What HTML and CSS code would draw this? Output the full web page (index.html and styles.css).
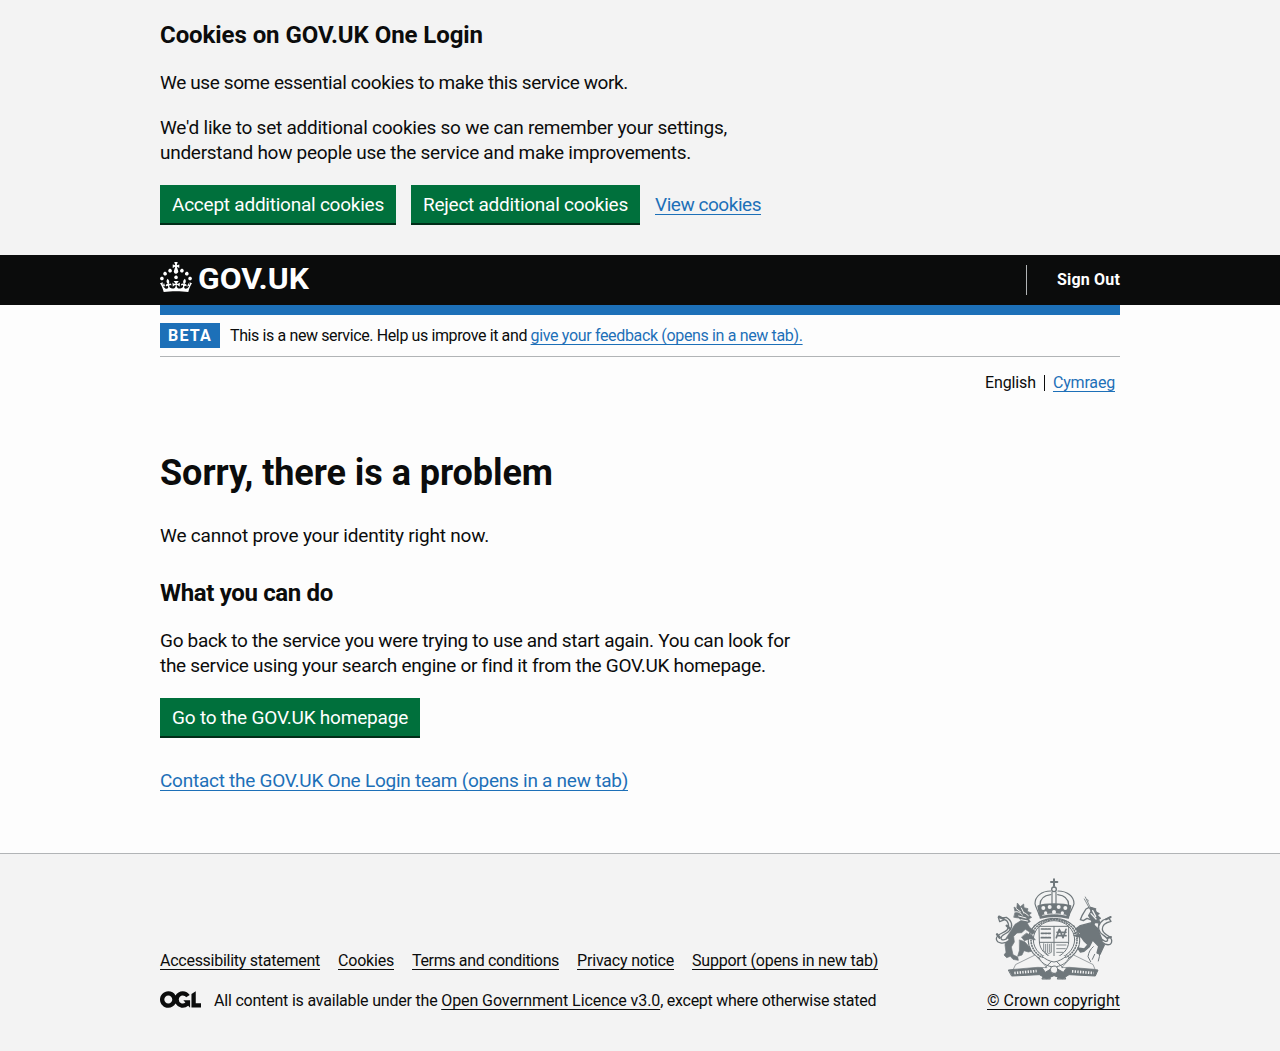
FILE: index.html
```html
<!DOCTYPE html>
<html lang="en">
<head>
<meta charset="utf-8">
<title>Sorry, there is a problem – GOV.UK One Login</title>
<link rel="stylesheet" href="styles.css">
</head>
<body>
<section class="cookie-banner" aria-label="Cookies on GOV.UK One Login">
  <div class="container">
    <h2 class="heading-m t-cookie-title">Cookies on GOV.UK One Login</h2>
    <p class="body-text t-essential">We use some essential cookies to make this service work.</p>
    <p class="body-text t-additional">We'd like to set additional cookies so we can remember your settings,<br><span class="t-understand">understand how people use the service and make improvements.</span></p>
    <div class="button-group">
      <button class="button t-accept" type="button">Accept additional cookies</button>
      <button class="button t-reject" type="button">Reject additional cookies</button>
      <a class="link t-view" href="#">View cookies</a>
    </div>
  </div>
</section>

<header class="header">
  <div class="container header-row">
    <a class="logo" href="#" aria-label="GOV.UK">
      <svg width="148" height="30" viewBox="0 0 148 30" fill="currentColor">
        <path d="M22.6 10.4c-1 .4-2-.1-2.4-1-.4-.9.1-2 1-2.4.9-.4 2 .1 2.4 1s-.1 2-1 2.4m-5.9 6.7c-.9.4-2-.1-2.4-1-.4-.9.1-2 1-2.4.9-.4 2 .1 2.4 1s-.1 2-1 2.4m10.8-3.7c-1 .4-2-.1-2.4-1-.4-.9.1-2 1-2.4.9-.4 2 .1 2.4 1s0 2-1 2.4m3.3 4.8c-1 .4-2-.1-2.4-1-.4-.9.1-2 1-2.4.9-.4 2 .1 2.4 1s-.1 2-1 2.4M17 4.7l2.3 1.2V2.5l-2.3.7-.2-.2.9-3h-3.4l.9 3-.2.2c-.1.1-2.3-.7-2.3-.7v3.4L15 4.7c.1.1.1.2.2.2l-1.3 4c-.1.2-.1.4-.1.6 0 1.1.8 2 1.9 2.2h.7c1-.2 1.9-1.1 1.9-2.1 0-.2 0-.4-.1-.6l-1.3-4c-.1-.2 0-.2.1-.3m-7.6 5.7c.9.4 2-.1 2.4-1 .4-.9-.1-2-1-2.4-.9-.4-2 .1-2.4 1s0 2 1 2.4m-5 3c.9.4 2-.1 2.4-1 .4-.9-.1-2-1-2.4-.9-.4-2 .1-2.4 1s.1 2 1 2.4m-3.2 4.8c.9.4 2-.1 2.4-1 .4-.9-.1-2-1-2.4-.9-.4-2 .1-2.4 1s0 2 1 2.4m14.8 11c4.4 0 8.6.3 12.3.8 1.1-4.5 2.4-7 3.7-8.8l-2.5-.9c.2 1.3.3 1.9 0 2.7-.4-.4-.8-1.1-1.1-2.3l-1.2 4c.7-.5 1.3-.8 2-.9-1.1 2.5-2.6 3.1-3.5 3-1.1-.2-1.7-1.2-1.5-2.1.3-1.2 1.5-1.5 2.1-.1 1.1-2.3-.8-3-2-2.3 1.9-1.9 2.1-3.5.6-5.6-2.1 1.6-2.1 3.2-1.2 5.5-1.2-1.4-3.2-.6-2.5 1.6.9-1.4 2.1-.5 1.9.8-.2 1.1-1.7 2.1-3.5 1.9-2.7-.2-2.9-2.1-2.9-3.6.7-.1 1.9.5 2.9 1.9l.4-4.3c-1.1 1.1-2.1 1.4-3.2 1.4.4-1.2 2.1-3 2.1-3h-5.4s1.7 1.9 2.1 3c-1.1 0-2.1-.2-3.2-1.4l.4 4.3c1-1.4 2.2-2 2.9-1.9-.1 1.5-.2 3.4-2.9 3.6-1.9.2-3.4-.8-3.5-1.9-.2-1.3 1-2.2 1.9-.8.7-2.3-1.2-3-2.5-1.6.9-2.2.9-3.9-1.2-5.5-1.5 2-1.3 3.7.6 5.6-1.2-.7-3.1 0-2 2.3.6-1.4 1.8-1.1 2.1.1.2.9-.3 1.9-1.5 2.1-.9.2-2.4-.5-3.5-3 .6 0 1.2.3 2 .9l-1.2-4c-.3 1.1-.7 1.9-1.1 2.3-.3-.8-.2-1.4 0-2.7l-2.9.9C1.3 23 2.6 25.5 3.7 30c3.7-.5 7.9-.8 12.3-.8"/>
        <text class="logo-text" x="38" y="27.4" textLength="111" lengthAdjust="spacingAndGlyphs">GOV.UK</text>
      </svg>
    </a>
    <nav class="header-nav"><a class="sign-out" href="#">Sign Out</a></nav>
  </div>
</header>

<div class="container page">
  <div class="phase-banner">
    <strong class="tag">BETA</strong>
    <span class="phase-text">This is a new service. Help us improve it and <a class="link t-feedback" href="#">give your feedback (opens in a new tab).</a></span>
  </div>
  <nav class="languages" aria-label="Language">
    <span class="language t-english">English</span>
    <a class="link language-link" href="#">Cymraeg</a>
  </nav>
  <main class="main">
    <h1 class="heading-l">Sorry, there is a problem</h1>
    <p class="body-text t-cannot">We cannot prove your identity right now.</p>
    <h2 class="heading-m t-what">What you can do</h2>
    <p class="body-text t-back">Go back to the service you were trying to use and start again. You can look for<br><span class="t-search">the service using your search engine or find it from the GOV.UK homepage.</span></p>
    <a class="button t-home" href="#">Go to the GOV.UK homepage</a>
    <p class="body-text contact"><a class="link" href="#">Contact the GOV.UK One Login team (opens in a new tab)</a></p>
  </main>
</div>

<footer class="footer">
  <div class="container footer-row">
    <div class="footer-meta">
      <ul class="footer-links">
        <li><a class="footer-link t-access" href="#">Accessibility statement</a></li>
        <li><a class="footer-link t-cookies" href="#">Cookies</a></li>
        <li><a class="footer-link t-terms" href="#">Terms and conditions</a></li>
        <li><a class="footer-link t-privacy" href="#">Privacy notice</a></li>
        <li><a class="footer-link t-support" href="#">Support (opens in new tab)</a></li>
      </ul>
      <div class="licence">
        <svg class="ogl" width="41" height="17" viewBox="0 0 483.2 195.7" fill="currentColor"><path d="M421.5 142.8V.1l-50.7 32.3v161.1h112.4v-50.7zm-122.3-9.6A47.12 47.12 0 0 1 221 97.8c0-26 21.1-47.1 47.1-47.1 16.7 0 31.4 8.7 39.7 21.8l42.7-27.2A97.63 97.63 0 0 0 268.1 0c-36.5 0-68.3 20.1-85.1 49.7A98 98 0 0 0 97.8 0C43.9 0 0 43.9 0 97.8s43.9 97.8 97.8 97.8c36.5 0 68.3-20.1 85.1-49.7a97.76 97.76 0 0 0 149.6 25.4l19.4 22.2h3v-87.8h-80l24.3 27.5zM97.8 145c-26 0-47.1-21.1-47.1-47.1s21.1-47.1 47.1-47.1 47.1 21.1 47.1 47.1S123.8 145 97.8 145"/></svg>
        <span class="licence-text"><span class="t-content">All content is available under the </span><a class="footer-link t-ogl" href="#">Open Government Licence v3.0</a><span class="t-except">, except where otherwise stated</span></span>
      </div>
    </div>
    <div class="crown">
      <svg class="arms" width="118" height="104" viewBox="45 38 354 312" fill="none" stroke="#6f777b" stroke-linecap="round" stroke-linejoin="round">
        <!-- crown -->
        <g stroke-width="4">
          <path d="M222 42v20M213 50h19" stroke-width="6"/>
          <circle cx="222" cy="72" r="7"/>
          <path d="M178 151c-3-14-11-24-13-36 0-22 20-38 47-38M267 151c3-14 13-24 15-36 0-22-21-38-48-38M180 119c0-16 9-28 32-31M266 119c0-16-10-28-33-31M216 80v42M228 80v42" stroke-width="3.5"/>
          <path d="M174 122c20-8 76-8 98 0l-7 36c-25-6-59-6-84 0z" fill="#6f777b"/>
          <g fill="#f3f3f3" stroke="none"><circle cx="190" cy="128" r="6"/><circle cx="209" cy="125" r="6"/><circle cx="236" cy="125" r="6"/><circle cx="256" cy="128" r="6"/><circle cx="197" cy="143" r="5"/><circle cx="222" cy="140" r="6"/><circle cx="247" cy="143" r="5"/></g>
          <path d="M188 150c22-6 48-6 70 0" stroke="#f3f3f3" stroke-width="2.5"/>
        </g>
        <!-- garter and quartered shield -->
        <g stroke-width="3">
          <ellipse cx="222" cy="225" rx="77" ry="66" stroke-dasharray="11 3" stroke-width="3.5"/>
          <ellipse cx="222" cy="223" rx="62" ry="57"/>
          <ellipse cx="222" cy="224" rx="69" ry="61" stroke-dasharray="2 6" stroke-width="5"/>
          <path d="M178 183h88v45c0 26-20 42-44 52-24-10-44-26-44-52zM222 183v97M178 231h88"/>
          <path d="M184 191h30M184 204h30M184 217h30M229 217l9-25 11 25 9-25M231 201h27M231 211h27" stroke-width="5" stroke-dasharray="7 3"/>
          <path d="M191 235v20l11 12 12-6v-26M197 237v22M203 236v26M209 237v23M230 239h28M230 250h26M230 261h19" stroke-width="2.5"/>
          <path d="M176 171c28-12 65-12 91 0M164 179c-8 11-12 22-13 38M281 180c8 11 12 22 12 38" stroke-dasharray="5 4"/>
        </g>
        <!-- lion -->
        <g fill="#6f777b" stroke-width="2">
          <path d="M105 139l-3-14 8 5 2-17 9 11 10-8 1 11 12 3-2 8 12 5-7 6 8 7-9 5 5 8-9 5 7 12 17 14-8 6-22-14-11 10-14 1-10 10 2 17-9 15 5 23 14 7 2 10-16-3-8-9-11 4-8-8 6-8-3-22 4-22 12-18 14-22 19-12-8-7-14-2z"/>
          <path d="M119 224l15 5 17 19 3 10-9 2-13-4-6 13-13 4 5-17zM140 204l18 9 8 11-15-4-18 6-8-10z"/>
          <path d="M102 141c9-5 17 0 25 8M109 130l13 10M124 128l8 16M116 152l22 6M123 163l20 4M134 142l11 9" stroke="#f3f3f3" stroke-width="3"/>
          <path d="M88 225c-14 13-37 10-39-4-1-15 23-17 32-27 9-11 4-28-7-31l-15 6-4-13 12 2 12-2c18 11 20 27 10 39-9 12-25 12-26 23 1 9 13 7 22-2z" fill="#f3f3f3" stroke-width="4"/>
          <path d="M57 154l14 7M59 217l-8-10M90 190l-10-9" stroke-width="7"/>
        </g>
        <!-- unicorn -->
        <g stroke-width="4">
          <path d="M316 95l15 32M323 103l2 4M313 101l17 31" stroke-width="2.5"/>
          <path d="M326 127l-8 4-12 20-5 12 9 3 11-7 14 5 7 14-18 18-24-2-18 11M333 127l13 7 7 18 5 17-4 23" fill="#f3f3f3"/>
          <path d="M331 126l16 5-4 7 14 7-7 4 11 10-9 4 7 10-13-2-9 9-2-15-9-14 7-12z" fill="#6f777b"/>
          <path d="M317 149l3 1M338 136l9 17M333 145l15 16" stroke="#f3f3f3"/>
          <path d="M301 181l34-9 18 18 12 31 8 18-13 28-9-4 5-20-18-19-10 20-16 14-11 2-8-12 20 3 11-13-11-10-9-13-22-4 22-4-17-16z" fill="#6f777b"/>
          <path d="M340 244c-9 8-14 16-16 30l8 15M357 240c3 14 4 28-2 47M344 267l-7 15" stroke-width="3"/>
          <path d="M366 230c17 14 30 9 29-5-1-16-27-15-28-33-1-15 13-21 26-24l-7-10-16 6c-16 11-18 26-9 38 8 9 22 13 22 22-2 7-10 4-17-2z" fill="#f3f3f3"/>
          <path d="M378 162l14-7M393 215l-10 3" stroke-width="6"/>
        </g>
        <!-- compartment and motto ribbon -->
        <g stroke-width="3">
          <path d="M86 314l98-10 12 17 26-16 28 16 12-17 92 10-8 18-79-4-19 12-26-9-22 9-22-12-82 4z" fill="#6f777b"/>
          <path d="M103 323l67-6M276 318l65 5" stroke="#f3f3f3" stroke-width="8" stroke-dasharray="4 4" stroke-linecap="butt"/>
          <path d="M108 297l57-28 36 38-28-1-72 6zM338 297l-57-28-36 38 24-1 75 6z" fill="#f3f3f3" stroke-width="2"/>
          <path d="M177 277c8 18 24 26 45 28 20-2 37-10 45-28M185 272c12 10 23 16 37 18 14-2 26-8 37-18M196 306l18-17M248 306l-18-17" fill="#f3f3f3"/>
          <circle cx="222" cy="313" r="11" fill="#f3f3f3"/>
          <path d="M186 340c4-13 22-13 25 0zM232 340c4-13 22-13 25 0z" fill="#6f777b"/>
          <path d="M211 335l11-11 10 11"/>
        </g>
      </svg>
      <a class="footer-link t-crown" href="#">© Crown copyright</a>
    </div>
  </div>
</footer>
</body>
</html>
```
FILE: styles.css
```css
* { box-sizing: border-box; }

body {
  margin: 0;
  background: #fdfdfd;
  color: #0b0c0c;
  font-family: Roboto, "Liberation Sans", sans-serif;
  font-size: 16px;
  line-height: 20px;
}

h1, h2, p, ul { margin: 0; padding: 0; }
svg { display: block; }

.container { width: 960px; margin: 0 auto; }

.heading-m { font-size: 24px; line-height: 30px; font-weight: 700; }
.heading-l { font-size: 36px; line-height: 40px; font-weight: 700; letter-spacing: -0.053px; }
.body-text { font-size: 19px; line-height: 25px; white-space: nowrap; }

.link {
  color: #1d70b8;
  text-decoration: underline 1px;
  text-underline-offset: 3px;
  text-decoration-skip-ink: none;
}

.button {
  display: block;
  width: max-content;
  height: 38px;
  padding: 0 12px;
  border: 0;
  background: #00703c;
  box-shadow: 0 2px 0 #002d18;
  color: #fff;
  font: 400 19px/39px Roboto, "Liberation Sans", sans-serif;
  text-decoration: none;
  white-space: nowrap;
}

/* cookie banner */
.cookie-banner { height: 255px; padding-top: 20px; background: #f3f3f3; }
.cookie-banner .body-text { margin-top: 20px; }
.button-group { display: flex; gap: 15px; margin-top: 20px; }
.button-group .link { font-size: 19px; line-height: 39px; }

/* header */
.header { height: 50px; background: #0b0c0c; color: #fff; }
.header-row { display: flex; justify-content: space-between; align-items: flex-start; height: 50px; }
.logo { margin-top: 7px; color: #fff; }
.logo svg { overflow: visible; }
.logo-text { font-size: 29.5px; font-weight: 700; }
.header-nav { margin-top: 10px; padding-left: 30px; border-left: 1px solid #b1b4b6; line-height: 30px; }
.sign-out { color: #fff; font-weight: 700; text-decoration: none; letter-spacing: 0.178px; }

/* phase banner and language choice */
.page { border-top: 10px solid #1d70b8; }
.phase-banner { display: flex; align-items: center; gap: 10px; height: 42px; border-bottom: 1px solid #b1b4b6; }
.tag { width: 60px; padding-left: 8px; background: #1d70b8; color: #fff; line-height: 25px; letter-spacing: 1.2px; }
.phase-text { letter-spacing: -0.384px; white-space: nowrap; }
.languages { display: flex; justify-content: flex-end; padding: 18px 5px 0 0; line-height: 16px; }
.language { padding-right: 8px; border-right: 1px solid #0b0c0c; }
.language-link { padding-left: 8px; letter-spacing: -0.185px; }

/* content */
.main { height: 462px; padding-top: 62px; }
.main .heading-l + .body-text { margin-top: 30px; }
.main .heading-m { margin-top: 30px; }
.main .heading-m + .body-text { margin-top: 20px; }
.main .button { margin-top: 20px; }
.contact { margin-top: 32px; letter-spacing: -0.253px; }

/* footer */
.footer { height: 198px; border-top: 1px solid #b1b4b6; background: #f3f3f3; }
.footer-row { display: flex; justify-content: space-between; align-items: flex-end; height: 157px; }
.footer-links { display: flex; gap: 18px; margin-bottom: 20px; list-style: none; white-space: nowrap; }
.footer-link {
  color: #0b0c0c;
  text-decoration: underline 1px;
  text-underline-offset: 3px;
  text-decoration-skip-ink: none;
}
.licence { display: flex; gap: 13px; white-space: nowrap; }
.crown { display: flex; flex-direction: column; align-items: flex-end; white-space: nowrap; }
.arms { margin: 0 7px 9px 0; }

/* per-string tracking */
.t-cookie-title { letter-spacing: -0.072px; }
.t-essential { letter-spacing: -0.386px; }
.t-additional { letter-spacing: -0.243px; }
.t-understand { letter-spacing: -0.28px; }
.t-accept { letter-spacing: -0.237px; }
.t-reject { letter-spacing: -0.25px; }
.t-view { letter-spacing: -0.461px; }
.t-feedback { letter-spacing: -0.345px; }
.t-english { letter-spacing: -0.109px; }
.t-cannot { letter-spacing: -0.186px; }
.t-what { letter-spacing: -0.337px; }
.t-back { letter-spacing: -0.311px; }
.t-search { letter-spacing: -0.294px; }
.t-home { letter-spacing: -0.204px; }
.t-access { letter-spacing: -0.261px; }
.t-cookies { letter-spacing: -0.201px; }
.t-terms { letter-spacing: -0.353px; }
.t-privacy { letter-spacing: -0.186px; }
.t-support { letter-spacing: -0.233px; }
.t-content { letter-spacing: -0.2px; }
.t-ogl { letter-spacing: -0.076px; }
.t-except { letter-spacing: -0.266px; }
.t-crown { letter-spacing: 0.03px; }
```
